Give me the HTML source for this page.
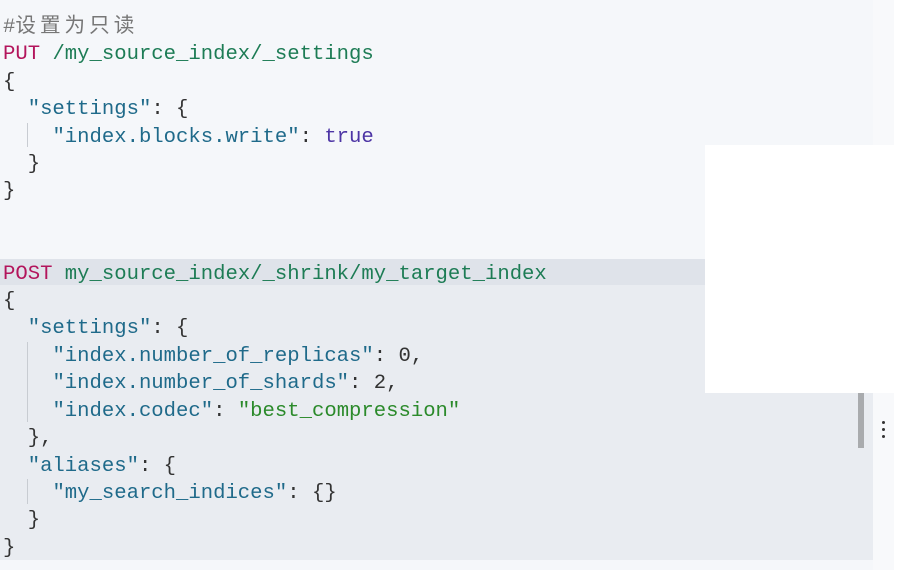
<!DOCTYPE html>
<html><head><meta charset="utf-8"><style>
html,body{margin:0;padding:0;width:919px;height:570px;overflow:hidden;background:#fff;position:relative}
.ed{position:absolute;left:0;top:0;width:873px;height:570px;background:#f5f7fa}
.sel{position:absolute;left:0;top:285px;width:873px;height:275px;background:#e9ecf1}
.hl{position:absolute;left:0;top:259px;width:873px;height:26px;background:#dfe3ea}
.gut{position:absolute;left:873px;top:0;width:21px;height:570px;background:#f8f9fb}
.code{position:absolute;left:3px;top:14px;font-family:"Liberation Mono","Noto Sans CJK SC",monospace;font-size:20.6px;line-height:27.4px;white-space:pre;color:#333}
.m{color:#b3155c}.p{color:#1d7c55}.k{color:#1f6a8a}.t{color:#4d35a5}.s{color:#2b8a2b}.c{color:#777}
.g{position:absolute;width:1px;background:#c8ccd2;left:27px}
.wb{position:absolute;left:705px;top:145px;width:189px;height:248px;background:#fff}
.sb{position:absolute;left:858px;top:393px;width:6px;height:55px;background:#a9abae}
.d{position:absolute;left:882px;width:3px;height:3px;background:#333;border-radius:50%}
</style></head><body>
<div class="ed"></div><div class="sel"></div><div class="hl"></div><div class="gut"></div>
<div class="g" style="top:123px;height:24px"></div>
<div class="g" style="top:342px;height:80px"></div>
<div class="g" style="top:479px;height:25px"></div>
<div class="code"><span class="c">#<span style="letter-spacing:4px">设置为只读</span></span>
<span class="m">PUT</span> <span class="p">/my_source_index/_settings</span>
{
  <span class="k">"settings"</span>: {
    <span class="k">"index.blocks.write"</span>: <span class="t">true</span>
  }
}


<span class="m">POST</span> <span class="p">my_source_index/_shrink/my_target_index</span>
{
  <span class="k">"settings"</span>: {
    <span class="k">"index.number_of_replicas"</span>: 0,
    <span class="k">"index.number_of_shards"</span>: 2,
    <span class="k">"index.codec"</span>: <span class="s">"best_compression"</span>
  },
  <span class="k">"aliases"</span>: {
    <span class="k">"my_search_indices"</span>: {}
  }
}</div>
<div class="wb"></div><div class="sb"></div>
<div class="d" style="top:421px"></div><div class="d" style="top:428px"></div><div class="d" style="top:435px"></div>
</body></html>
